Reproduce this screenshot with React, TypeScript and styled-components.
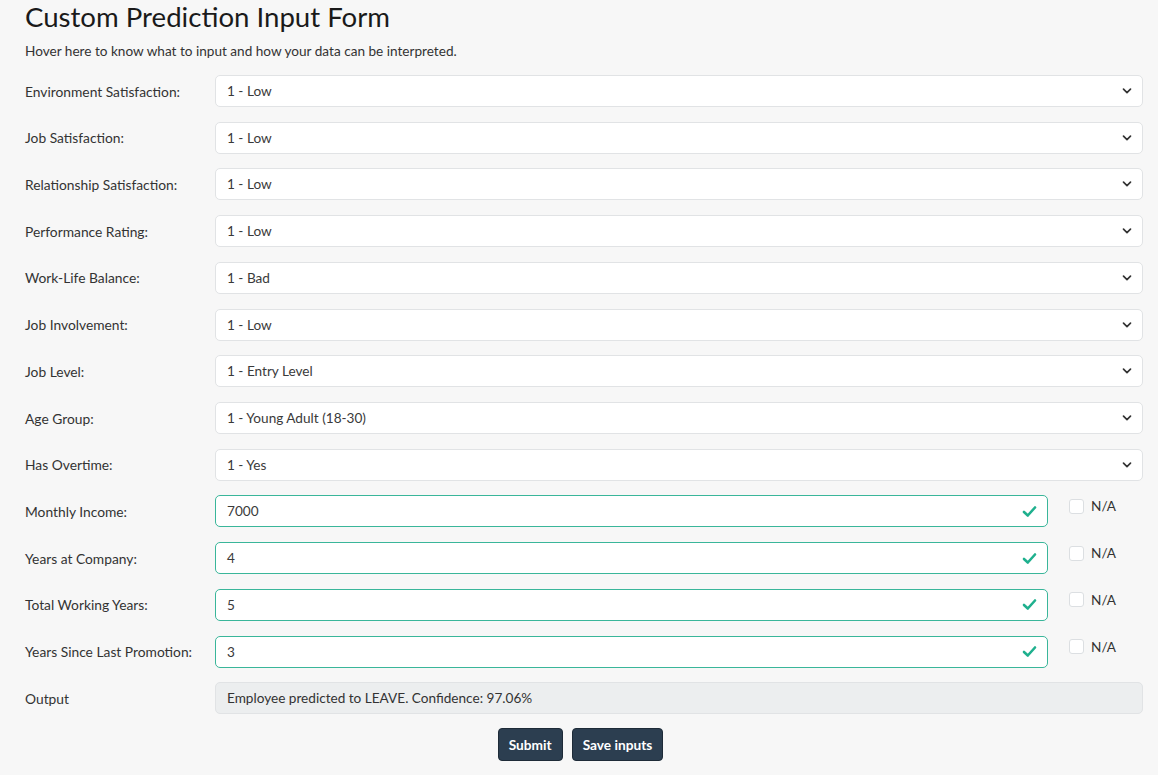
import React from "react";
import styled, { createGlobalStyle } from "styled-components";

const GlobalStyle = createGlobalStyle`
  html, body {
    margin: 0;
    padding: 0;
    background: #f7f7f7;
  }
  body {
    font-family: "Lato", "Liberation Sans", sans-serif;
    color: #2b2b2b;
  }
`;

const Page = styled.div`
  padding: 0 15px 0 25px;
  min-height: 775px;
  box-sizing: border-box;
`;

const Title = styled.h1`
  font-family: "Lato", sans-serif;
  font-weight: 400;
  font-size: 27.6px;
  line-height: 34px;
  margin: 0;
  color: #1a1a1a;
`;

const Hint = styled.p`
  font-size: 13.6px;
  line-height: 18px;
  margin: 8px 0 15px;
  color: #333;
`;

const Form = styled.div`
  display: flex;
  flex-direction: column;
  gap: 14.72px;
`;

const Row = styled.div`
  display: grid;
  grid-template-columns: 190px 1fr;
  align-items: center;
  height: 32px;
`;

const Label = styled.label`
  font-size: 13.8px;
  color: #333;
`;

const FieldBox = styled.div<{ valid?: boolean; readOnly?: boolean }>`
  display: flex;
  align-items: center;
  justify-content: space-between;
  box-sizing: border-box;
  height: 32px;
  padding: 0 10px 0 11px;
  border-radius: 5px;
  font-size: 13.6px;
  color: #3a3a3a;
  background: ${p => (p.readOnly ? "#eceeef" : "#fff")};
  border: 1px solid ${p => (p.valid ? "#3ab69a" : "#e1e3e5")};
  ${p => p.readOnly && "color: #333;"}
`;

const InputCell = styled.div`
  display: flex;
  align-items: flex-start;
  height: 32px;
`;

const InputWrap = styled.div`
  flex: 1;
`;

const NaCell = styled.label`
  width: 95px;
  display: flex;
  align-items: center;
  gap: 7px;
  padding: 3px 0 0 21px;
  box-sizing: border-box;
  font-size: 13.6px;
  color: #333;
`;

const CheckBox = styled.span`
  width: 13px;
  height: 13px;
  border: 1px solid #dcdfe2;
  border-radius: 3px;
  background: #fff;
`;

const Actions = styled.div`
  display: flex;
  justify-content: center;
  gap: 9px;
  margin-top: 14px;
  margin-left: -22px;
  margin-right: -15px;
`;

const Button = styled.button`
  height: 33px;
  padding: 0 10px;
  border: 1px solid #1e2b38;
  border-radius: 4px;
  background: #2c3e50;
  color: #fff;
  font-family: "Lato", sans-serif;
  font-weight: 700;
  font-size: 13.7px;
`;

const Chevron = () => (
  <svg width="10" height="10" viewBox="0 0 10 10">
    <polyline points="1.5,3.2 5,6.6 8.5,3.2" fill="none" stroke="#333" strokeWidth="1.7" strokeLinecap="round" strokeLinejoin="round" />
  </svg>
);

const Check = () => (
  <svg width="15" height="13" viewBox="0 0 15 13">
    <polyline points="2,7 5.8,10.5 13,2.5" fill="none" stroke="#1fb08e" strokeWidth="2.6" strokeLinecap="round" strokeLinejoin="round" />
  </svg>
);

const selects: [string, string][] = [
  ["Environment Satisfaction:", "1 - Low"],
  ["Job Satisfaction:", "1 - Low"],
  ["Relationship Satisfaction:", "1 - Low"],
  ["Performance Rating:", "1 - Low"],
  ["Work-Life Balance:", "1 - Bad"],
  ["Job Involvement:", "1 - Low"],
  ["Job Level:", "1 - Entry Level"],
  ["Age Group:", "1 - Young Adult (18-30)"],
  ["Has Overtime:", "1 - Yes"],
];

const numbers: [string, string][] = [
  ["Monthly Income:", "7000"],
  ["Years at Company:", "4"],
  ["Total Working Years:", "5"],
  ["Years Since Last Promotion:", "3"],
];

export default function App() {
  return (
    <Page>
      <GlobalStyle />
      <Title>Custom Prediction Input Form</Title>
      <Hint>Hover here to know what to input and how your data can be interpreted.</Hint>
      <Form>
        {selects.map(([label, value]) => (
          <Row key={label}>
            <Label>{label}</Label>
            <FieldBox>
              <span>{value}</span>
              <Chevron />
            </FieldBox>
          </Row>
        ))}
        {numbers.map(([label, value]) => (
          <Row key={label}>
            <Label>{label}</Label>
            <InputCell>
              <InputWrap>
                <FieldBox valid>
                  <span>{value}</span>
                  <Check />
                </FieldBox>
              </InputWrap>
              <NaCell>
                <CheckBox />
                N/A
              </NaCell>
            </InputCell>
          </Row>
        ))}
        <Row>
          <Label>Output</Label>
          <FieldBox readOnly>
            <span>Employee predicted to LEAVE. Confidence: 97.06%</span>
          </FieldBox>
        </Row>
      </Form>
      <Actions>
        <Button>Submit</Button>
        <Button>Save inputs</Button>
      </Actions>
    </Page>
  );
}
